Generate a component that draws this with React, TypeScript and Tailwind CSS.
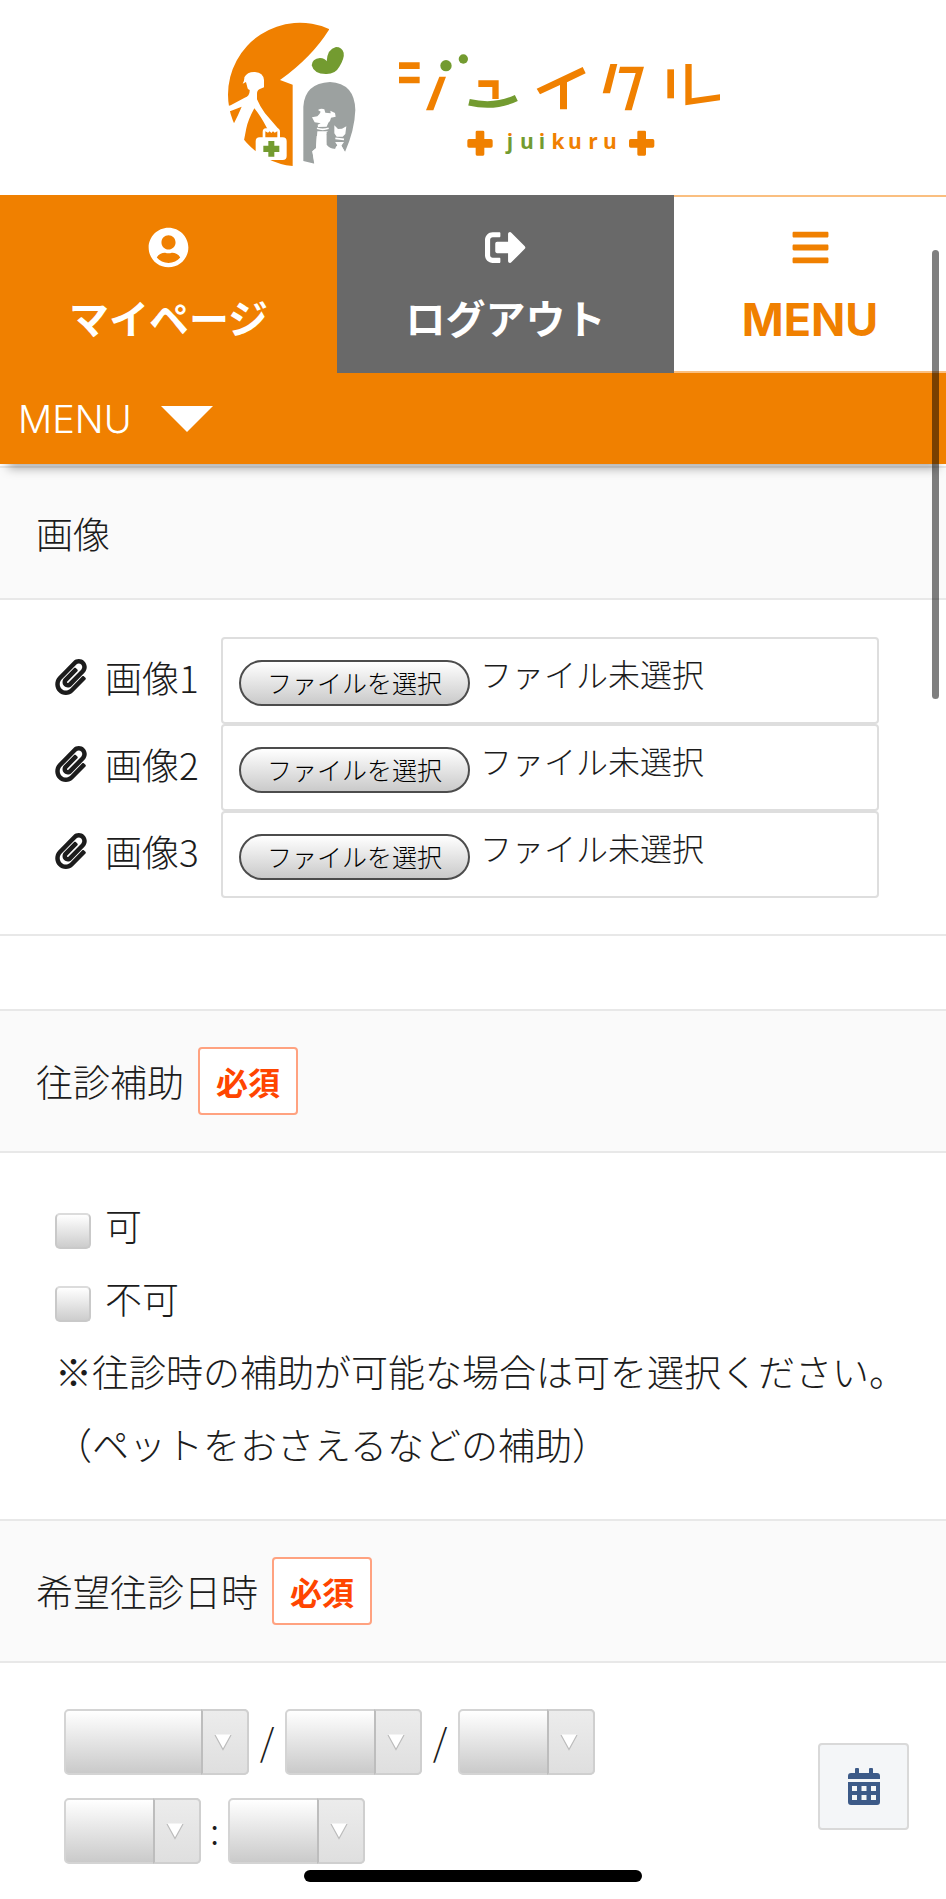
import { useRef } from "react";
import {
  FaBars,
  FaPaperclip,
  FaSignOutAlt,
  FaUserCircle,
} from "react-icons/fa";

function Logo() {
  return (
    <svg
      viewBox="223 20 500 150"
      className="w-[500px] max-w-full"
      role="img"
      aria-label="ジュイクル juikuru"
    >
      <defs>
        <linearGradient id="dot" gradientUnits="userSpaceOnUse" x1="0" y1="130" x2="0" y2="142">
          <stop offset="0.5" stopColor="#f08000" />
          <stop offset="0.5" stopColor="#739b30" />
        </linearGradient>
      </defs>

      <g transform="translate(210 0) scale(0.33333)">
        <path
          fill="#f08000"
          d="M357 89Q305 172 210 240L248 254V498A215.500 215.500 0 0 1 54 284A215.500 215.500 0 0 1 357 87Z"
        />
        <path
          fill="#fff"
          d="M98 251Q104 240 103 232Q112 215 135 216Q160 218 162 240V262L148 268Q141 271 141 282V298Q150 320 165 340L205 386V396H168L172 386Q150 345 133 325Q114 360 109 385L102 421L45 421L72 370Q86 342 95 320L62 333L48 335L46 320L62 316L104 293Q120 288 119 270Q112 268 112 262L108 246Z"
        />
        <path fill="#fff" d="M149 412H158V396Q158 385 168 385H200Q210 385 210 396V412H218Q230 412 230 424V468Q230 480 218 480H149Q137 480 137 468V424Q137 412 149 412Z" />
        <path fill="#f08000" d="M166 412V394L174 398L179 394L184 399L189 394L194 398L202 394V412Z" />
        <path fill="#739b30" d="M175 423H193V437H208V456H193V470H175V456H160V437H175Z" />
        <path
          fill="#739b30"
          d="M350 184Q345 175 330 174Q306 176 305 196Q312 223 350 222Q376 222 388 200Q404 174 401 158Q396 141 378 141Q352 147 350 184Z"
        />
        <path
          fill="#9ca1a0"
          d="M280 483V320Q284 250 360 246Q434 250 436 330Q434 390 405 456L390 430L378 440L374 446L350 436V404L320 408L318 445L307 454L314 491Z"
        />
        <path
          fill="#fff"
          d="M306 352L322 349Q329 343 332 335L324 330Q334 323 343 328L346 338L362 340L361 332L375 339L377 350L363 353Q362 362 355 368L350 380L324 381L323 374L332 370L314 367Z"
        />
        <path fill="none" stroke="#fff" strokeWidth="5" d="M321 385Q338 391 356 385" />
        <path
          fill="#fff"
          d="M322 394L353 394L350 404V426Q353 440 366 444L376 446L382 436L375 426H402L394 437L405 456L400 500H314L307 454L318 445Z"
        />
        <path fill="#9ca1a0" d="M350 396H373V420L376 428V446Q360 447 350 434Z" />
        <path fill="#fff" d="M373 376L384 387L396 386L409 379L406 402L398 410H380L373 400Z" />
        <path fill="none" stroke="#fff" strokeWidth="5" d="M376 415L402 418" />
      </g>

      <g transform="translate(380 30) scale(0.33333)" fill="#f08000">
        <path d="M57 97H119V117H57ZM57 140H119V160H57Z" />
        <path d="M178 140H198L160 241H138Z" />
        <circle cx="198" cy="107" r="17" fill="#739b30" />
        <circle cx="250" cy="87" r="14" fill="#739b30" />
        <path d="M295 151H356V207H337V171H295Z" />
        <path d="M267 217Q345 235 409 204" fill="none" stroke="#739b30" strokeWidth="20" />
        <path d="M470 176L608 111L617 130L561 157V238H540V165L480 193Z" />
        <path d="M691 102H712L690 190H668Z" />
        <path d="M720 110H792L755 241H734L767 129H716Z" />
        <path d="M862 118H882V205H862Z" />
        <path d="M916 102H935V205L1020 193V211L916 226Z" />
        <path d="M291 302H309Q313 302 313 306V327H333Q338 327 338 332V348Q338 353 333 353H313V373Q313 377 309 377H291Q287 377 287 373V353H267Q262 353 262 348V332Q262 327 267 327H287V306Q287 302 291 302Z" />
        <path
          transform="translate(485 0)"
          d="M291 302H309Q313 302 313 306V327H333Q338 327 338 332V348Q338 353 333 353H313V373Q313 377 309 377H291Q287 377 287 373V353H267Q262 353 262 348V332Q262 327 267 327H287V306Q287 302 291 302Z"
        />
      </g>

      <text
        y="149"
        textAnchor="middle"
        className="font-['Open_Sans','Noto_Sans',sans-serif] text-[21px] font-bold"
        fill="#f08000"
      >
        <tspan x="510" fill="url(#dot)">j</tspan>
        <tspan x="527" fill="#739b30">u</tspan>
        <tspan x="542" fill="url(#dot)">i</tspan>
        <tspan x="558">k</tspan>
        <tspan x="575">u</tspan>
        <tspan x="593">r</tspan>
        <tspan x="610">u</tspan>
      </text>
    </svg>
  );
}

function SectionHeading({ title, required = false }: { title: string; required?: boolean }) {
  return (
    <div className="flex items-center gap-[14px] border-y-2 border-[#e8e8e8] bg-[#fafafa] px-9 py-9">
      <h2 className="leading-[58px]">{title}</h2>
      {required && (
        <span className="rounded-[4px] border-2 border-[#ffa280] bg-white px-4 text-[32px] leading-[64px] font-bold text-[#ff4500]">
          必須
        </span>
      )}
    </div>
  );
}

function FileRow({ label, id }: { label: string; id: string }) {
  const input = useRef<HTMLInputElement>(null);
  return (
    <div className="flex items-start">
      <label htmlFor={id} className="flex w-[166px] shrink-0 items-center gap-[18px] leading-[80px]">
        <FaPaperclip className="h-9 w-8" aria-hidden="true" />
        {label}
      </label>
      <div className="flex h-[87px] grow items-start gap-[10px] rounded-[4px] border-2 border-[#dedede] bg-white px-4 pt-[13px]">
        <input id={id} ref={input} type="file" className="hidden" />
        <button
          type="button"
          onClick={() => input.current?.click()}
          className="mt-2 h-[46px] w-[231px] rounded-full border-2 border-[#4c4c4c] bg-linear-to-b from-white to-[#cacaca] text-[25px] leading-[40px] text-black"
        >
          <span className="block pb-[2px]">ファイルを選択</span>
        </button>
        <span className="text-[32px] leading-[42px]">ファイル未選択</span>
      </div>
    </div>
  );
}

function Choice({ label }: { label: string }) {
  return (
    <label className="flex h-[73px] items-center gap-[14px]">
      <input
        type="checkbox"
        className="mt-[10px] size-9 appearance-none rounded-[5px] border-2 border-[#c9c9c9] border-t-[#dcdcdc] bg-linear-to-b from-white to-[#cdcdcd] checked:to-[#f08000]"
      />
      {label}
    </label>
  );
}

function Dropdown({ label, wide = false }: { label: string; wide?: boolean }) {
  return (
    <span className={wide ? "relative block w-[185px]" : "relative block w-[137px]"}>
      <select
        aria-label={label}
        className="block h-[66px] w-full appearance-none rounded-[5px] border-2 border-[#d4d4d4] bg-linear-to-b from-white to-[#cacaca] pl-3 text-[32px]"
      >
        <option value=""></option>
      </select>
      <span
        aria-hidden="true"
        className="pointer-events-none absolute inset-y-0 right-0 flex w-[48px] items-center justify-center rounded-r-[5px] border-2 border-[#cfcfcf] border-l-[#bdbdbd] bg-linear-to-b from-[#ececec] to-[#dfdfdf] pr-[4px]"
      >
        <svg viewBox="0 0 18 17" className="h-[17px] w-[18px]">
          <path d="M1 0.5L9 15.5L17 0.5Z" fill="#fff" />
          <path d="M1 1L9 15.5L17 1" fill="none" stroke="#bcbcbc" strokeWidth="1.2" />
        </svg>
      </span>
    </span>
  );
}

function CalendarIcon() {
  return (
    <svg viewBox="0 0 32 37" className="h-[37px] w-8" fill="currentColor" aria-hidden="true">
      <path d="M7 1Q7 0 8 0H10Q11 0 11 1V5H21V1Q21 0 22 0H24Q25 0 25 1V5H29Q32 5 32 8V11H0V8Q0 5 3 5H7Z" />
      <path
        fillRule="evenodd"
        d="M0 14H32V34Q32 37 29 37H3Q0 37 0 34ZM4 18V23H9V18ZM13.500 18V23H18.500V18ZM23 18V23H28V18ZM4 27V32H9V27ZM13.500 27V32H18.500V27ZM23 27V32H28V27Z"
      />
    </svg>
  );
}

export default function App() {
  return (
    <div className="min-h-screen bg-white font-['Noto_Sans_CJK_JP','Noto_Sans',sans-serif] text-[37px] font-light text-[#1c1c1c]">
      <header className="relative z-10 shadow-[0_12px_10px_-8px_rgba(0,0,0,0.35)]">
        <div className="flex justify-center bg-white pt-5 pb-[25px]">
          <Logo />
        </div>
        <nav className="grid grid-cols-[337fr_337fr_272fr] text-[40px] leading-[60px] font-bold">
          <a href="#mypage" className="flex h-[178px] flex-col items-center gap-[19px] bg-[#f08000] pt-8 text-white">
            <FaUserCircle className="size-[41px]" aria-hidden="true" />
            マイページ
          </a>
          <a href="#logout" className="flex h-[178px] flex-col items-center gap-[19px] bg-[#696969] pt-8 text-white">
            <FaSignOutAlt className="size-[41px]" aria-hidden="true" />
            ログアウト
          </a>
          <a
            href="#menu"
            className="flex h-[178px] flex-col items-center gap-[22px] border-y-2 border-[#fabf80] bg-white pt-[30px] font-['Inter',sans-serif] text-[45px] text-[#f08000]"
          >
            <FaBars className="size-[41px]" aria-hidden="true" />
            MENU
          </a>
        </nav>
        <button
          type="button"
          className="flex h-[91px] w-full items-center gap-[29px] bg-[#f08000] px-[18px] font-['Inter',sans-serif] text-[38px] leading-[60px] font-light text-white"
        >
          MENU
          <svg viewBox="0 0 52 26" className="h-[26px] w-[52px]" aria-hidden="true">
            <path d="M0 0H52L26 26Z" fill="#fff" />
          </svg>
        </button>
      </header>

      <main>
        <section className="pt-[2px]">
          <SectionHeading title="画像" />
          <div className="border-b-2 border-[#e8e8e8] pt-[37px] pr-[67px] pb-9 pl-[55px]">
            <FileRow id="image-1" label="画像1" />
            <FileRow id="image-2" label="画像2" />
            <FileRow id="image-3" label="画像3" />
          </div>
        </section>

        <section className="pt-[73px]">
          <SectionHeading title="往診補助" required />
          <div className="px-[55px] pt-9 pb-[38px] leading-[73px]">
            <Choice label="可" />
            <Choice label="不可" />
            <p className="whitespace-nowrap">※往診時の補助が可能な場合は可を選択ください。</p>
            <p className="whitespace-nowrap">（ペットをおさえるなどの補助）</p>
          </div>
        </section>

        <section>
          <SectionHeading title="希望往診日時" required />
          <div className="flex items-center justify-between pt-[46px] pr-[37px] pb-[35px] pl-16">
            <div className="flex flex-col gap-[23px]">
              <div className="flex items-center">
                <Dropdown label="年" wide />
                <span className="w-9 pb-1 text-center leading-[62px]">/</span>
                <Dropdown label="月" />
                <span className="w-9 pb-1 text-center leading-[62px]">/</span>
                <Dropdown label="日" />
              </div>
              <div className="flex items-center">
                <Dropdown label="時" />
                <span className="w-[27px] pb-1 text-center leading-[62px]">:</span>
                <Dropdown label="分" />
              </div>
            </div>
            <button
              type="button"
              aria-label="カレンダー"
              className="flex h-[87px] w-[91px] items-center justify-center rounded-[4px] border-2 border-[#d9d9d9] bg-[#f4f6f8] text-[#3c5a88]"
            >
              <CalendarIcon />
            </button>
          </div>
        </section>
      </main>

      <div aria-hidden="true" className="fixed top-[250px] right-[7px] z-20 h-[449px] w-[7px] rounded-full bg-black/50" />
      <div
        aria-hidden="true"
        className="fixed bottom-[17px] left-1/2 z-20 h-[12px] w-[338px] -translate-x-1/2 rounded-full bg-black"
      />
    </div>
  );
}
